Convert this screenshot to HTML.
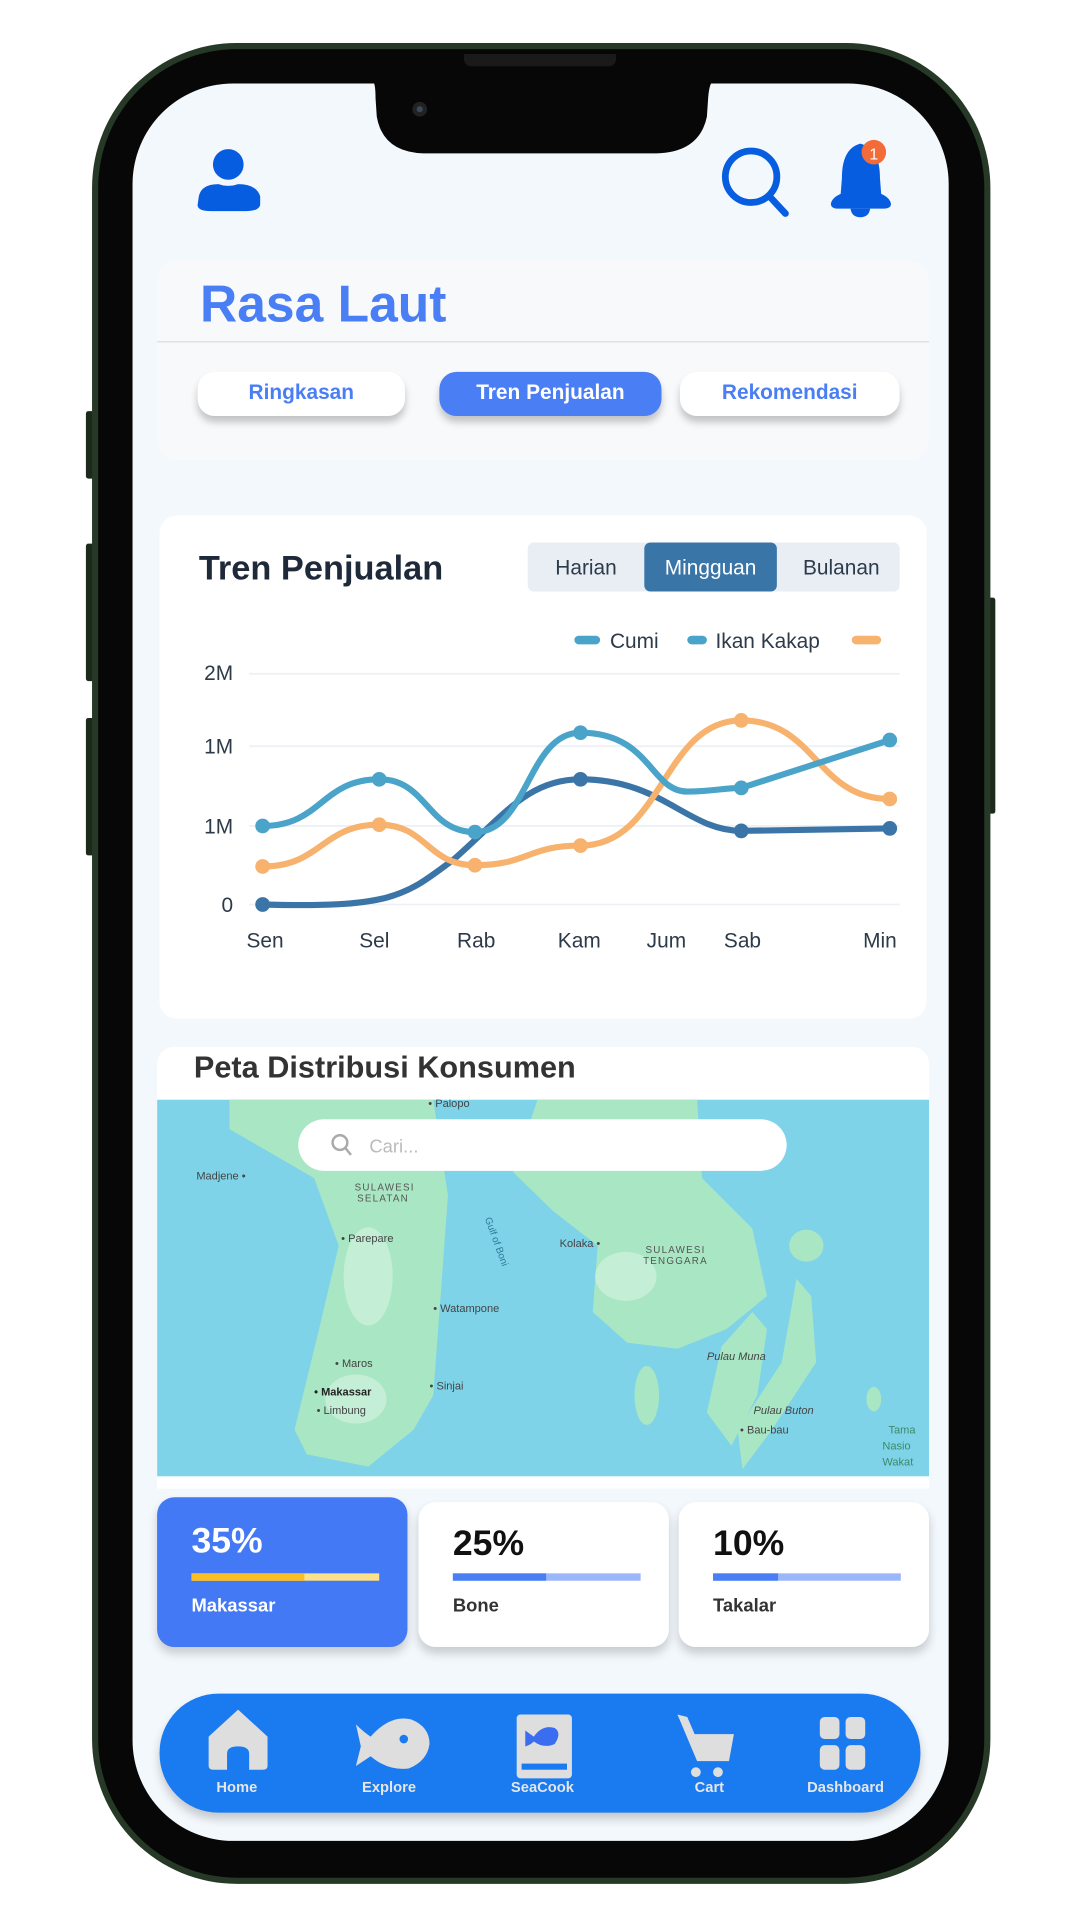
<!DOCTYPE html>
<html><head><meta charset="utf-8"><style>
html,body{margin:0;padding:0;background:#fff;width:1080px;height:1920px;overflow:hidden}
#w{position:absolute;left:0;top:0;width:880px;height:1565px;transform:scale(1.22727);transform-origin:0 0;font-family:"Liberation Sans",sans-serif}
.a{position:absolute}
.pill{position:absolute;top:303px;height:36px;border-radius:14px;background:#fff;box-shadow:0 5px 6px rgba(0,0,0,.22);color:#4a7ef5;font-weight:bold;font-size:17px;line-height:34px;text-align:center}
.card{position:absolute;top:1220px;height:122px;width:204px;border-radius:14px;background:#fff;box-shadow:0 5px 8px rgba(0,0,0,.18)}
.card .p{position:absolute;left:28px;top:18px;font-size:29px;font-weight:bold;color:#111}
.card .b{position:absolute;left:28px;top:62px;width:153px;height:6px;background:#9bb7fb}
.card .b i{display:block;height:6px;background:#4a7ef5}
.card .n{position:absolute;left:28px;top:80px;font-size:15px;font-weight:bold;color:#333}
.nl{position:absolute;top:1449px;color:#e6e6e6;font-size:12px;font-weight:bold;text-align:center;width:100px}
</style></head><body><div id="w">
<div class="a" style="left:70px;top:335px;width:8px;height:55px;background:#1c2a1c;border-radius:2px"></div>
<div class="a" style="left:70px;top:443px;width:8px;height:112px;background:#1c2a1c;border-radius:2px"></div>
<div class="a" style="left:70px;top:585px;width:8px;height:112px;background:#1c2a1c;border-radius:2px"></div>
<div class="a" style="left:804px;top:487px;width:7px;height:176px;background:#1c2a1c;border-radius:2px"></div>
<div class="a" style="left:75px;top:35px;width:732px;height:1500px;border-radius:118px;background:#263826"></div>
<div class="a" style="left:80px;top:40px;width:722px;height:1490px;border-radius:113px;background:#070707"></div>
<div class="a" style="left:108px;top:68px;width:665px;height:1432px;border-radius:82px;background:#f3f8fd;overflow:hidden"></div>
<div class="a" style="left:378px;top:44px;width:124px;height:10px;border-radius:0 0 6px 6px;background:#1a1a1a"></div>
<svg class="a" style="left:0;top:0" width="880" height="200">
<path d="M300,66 L303,66 Q306,66 306,80 L307,95 Q312,124 345,125 L535,125 Q570,124 576,95 L577,80 Q578,66 582,66 Z" fill="#070707"/>
<circle cx="342" cy="89" r="6" fill="#222"/><circle cx="342" cy="89" r="2.5" fill="#3a4a5a"/>
<circle cx="186" cy="134" r="12.5" fill="#075de0"/>
<path d="M162,160 Q164,150 178,150 Q186,153 194,150 Q209,150 212,160 L212,167 Q211,172 200,172 L172,172 Q161,172 161,167 Z" fill="#075de0"/>
<circle cx="612" cy="144" r="21" fill="none" stroke="#075de0" stroke-width="5.5"/>
<line x1="627" y1="160" x2="640" y2="174" stroke="#075de0" stroke-width="5.5" stroke-linecap="round"/>
<path d="M701,117 Q686,121 686,145 L685,158 Q678,161 677,166 Q677,170 683,170 L720,170 Q726,170 726,166 Q725,161 718,158 L717,145 Q717,121 701,117 Z" fill="#075de0"/>
<path d="M693,170 Q694,177 701,177 Q708,177 709,170 Z" fill="#075de0"/>
<circle cx="712" cy="124" r="10" fill="#f26b38"/>
<text x="712" y="130" fill="#fff" font-size="13" font-family="Liberation Sans" text-anchor="middle">1</text>
</svg>
<div class="a" style="left:128px;top:212px;width:629px;height:163px;border-radius:16px;background:#f8f9fa"></div>
<div class="a" style="left:163px;top:224px;font-size:42px;font-weight:bold;color:#4a7ef5">Rasa Laut</div>
<div class="a" style="left:128px;top:278px;width:629px;height:1px;background:#dcdcdc"></div>
<div class="pill" style="left:161px;width:169px">Ringkasan</div>
<div class="pill" style="left:358px;width:181px;background:#4a7ef5;color:#fff">Tren Penjualan</div>
<div class="pill" style="left:554px;width:179px">Rekomendasi</div>
<div class="a" style="left:130px;top:420px;width:625px;height:410px;border-radius:14px;background:#fff"></div>
<div class="a" style="left:162px;top:447px;font-size:28px;color:#1e2a3a;font-weight:600">Tren Penjualan</div>
<div class="a" style="left:430px;top:442px;width:303px;height:40px;border-radius:5px;background:#e9eef4"></div>
<div class="a" style="left:525px;top:442px;width:108px;height:40px;border-radius:5px;background:#3a75a8"></div>
<div class="a" style="left:430px;top:453px;width:95px;text-align:center;font-size:17px;color:#2c3a4a">Harian</div>
<div class="a" style="left:525px;top:453px;width:108px;text-align:center;font-size:17px;color:#fff">Mingguan</div>
<div class="a" style="left:633px;top:453px;width:105px;text-align:center;font-size:17px;color:#2c3a4a">Bulanan</div>
<svg class="a" style="left:0;top:0" width="880" height="840" font-family="Liberation Sans">
<rect x="468" y="518" width="21" height="7" rx="3.5" fill="#4aa3c8"/>
<text x="497" y="528" font-size="17" fill="#2c3a4a">Cumi</text>
<rect x="560" y="518" width="16" height="7" rx="3.5" fill="#4aa3c8"/>
<text x="583" y="528" font-size="17" fill="#2c3a4a">Ikan Kakap</text>
<rect x="694" y="518" width="24" height="7" rx="3.5" fill="#f7b26e"/>
<g stroke="#edf0f4" stroke-width="1.5"><line x1="203" y1="549" x2="733" y2="549"/><line x1="203" y1="608" x2="733" y2="608"/><line x1="203" y1="673" x2="733" y2="673"/><line x1="203" y1="737" x2="733" y2="737"/></g>
<g font-size="17" fill="#2c3a4a" text-anchor="end"><text x="190" y="554">2M</text><text x="190" y="614">1M</text><text x="190" y="679">1M</text><text x="190" y="743">0</text></g>
<g font-size="17" fill="#2c3a4a" text-anchor="middle"><text x="216" y="772">Sen</text><text x="305" y="772">Sel</text><text x="388" y="772">Rab</text><text x="472" y="772">Kam</text><text x="543" y="772">Jum</text><text x="605" y="772">Sab</text><text x="717" y="772">Min</text></g>
<g fill="none" stroke-width="5" stroke-linecap="round">
<path d="M214,737 C320,740 330,730 370,700 C410,665 430,635 473,635 C540,635 560,677 604,677 L725,675" stroke="#3b75a8"/>
<path d="M214,706 C262,706 262,672 309,672 C348,672 348,705 387,705 C430,705 430,689 473,689 C540,689 540,587 604,587 C665,587 665,651 725,651" stroke="#f7b26e"/>
<path d="M214,673 C262,673 262,635 309,635 C348,635 348,678 387,678 C430,678 430,597 473,597 C530,597 530,645 560,645 C580,645 590,642 604,642 L725,603" stroke="#4aa3c8"/>
</g>
<g fill="#3b75a8"><circle cx="214" cy="737" r="6"/><circle cx="473" cy="635" r="6"/><circle cx="604" cy="677" r="6"/><circle cx="725" cy="675" r="6"/></g>
<g fill="#f7b26e"><circle cx="214" cy="706" r="6"/><circle cx="309" cy="672" r="6"/><circle cx="387" cy="705" r="6"/><circle cx="473" cy="689" r="6"/><circle cx="604" cy="587" r="6"/><circle cx="725" cy="651" r="6"/></g>
<g fill="#4aa3c8"><circle cx="214" cy="673" r="6"/><circle cx="309" cy="635" r="6"/><circle cx="387" cy="678" r="6"/><circle cx="473" cy="597" r="6"/><circle cx="604" cy="642" r="6"/><circle cx="725" cy="603" r="6"/></g>
</svg>
<div class="a" style="left:128px;top:853px;width:629px;height:360px;border-radius:14px 14px 0 0;background:#fff"></div>
<div class="a" style="left:158px;top:856px;font-size:25px;font-weight:bold;color:#333">Peta Distribusi Konsumen</div>
<svg class="a" style="left:128px;top:896px" width="629" height="307" font-family="Liberation Sans">
<g transform="translate(-128,-896)">
<rect x="128" y="896" width="629" height="307" fill="#7fd3e8"/>
<g fill="#a9e6c4">
<path d="M187,896 L353,896 L365,974 L359,1056 L353,1137 L337,1165 L300,1195 L250,1185 L240,1165 L260,1083 L276,1015 L256,960 L187,920 Z"/>
<path d="M438,896 L568,896 L572,960 L613,1001 L625,1056 L592,1083 L552,1099 L511,1094 L483,1069 L487,1015 L451,987 L418,955 Z"/>
<path d="M613,1069 L588,1097 L576,1151 L596,1178 L617,1137 L625,1083 Z"/>
<path d="M649,1042 L661,1056 L665,1110 L629,1165 L605,1197 L601,1165 L637,1110 Z"/>
<ellipse cx="657" cy="1015" rx="14" ry="13"/><ellipse cx="527" cy="1137" rx="10" ry="24"/><ellipse cx="712" cy="1140" rx="6" ry="10"/>
</g>
<g fill="#c4eed6"><ellipse cx="300" cy="1040" rx="20" ry="40"/><ellipse cx="510" cy="1040" rx="25" ry="20"/><ellipse cx="290" cy="1140" rx="25" ry="20"/></g>
<g font-size="9" fill="#444">
<text x="349" y="902">• Palopo</text>
<text x="160" y="961">Madjene •</text>
<text x="289" y="970" fill="#555" font-size="8" letter-spacing="1">SULAWESI</text>
<text x="291" y="979" fill="#555" font-size="8" letter-spacing="1">SELATAN</text>
<text x="278" y="1012">• Parepare</text>
<text x="456" y="1016">Kolaka •</text>
<text x="526" y="1021" fill="#555" font-size="8" letter-spacing="1">SULAWESI</text>
<text x="524" y="1030" fill="#555" font-size="8" letter-spacing="1">TENGGARA</text>
<text x="353" y="1069">• Watampone</text>
<text x="273" y="1114">• Maros</text>
<text x="256" y="1137" fill="#222" font-weight="bold">• Makassar</text>
<text x="350" y="1132">• Sinjai</text>
<text x="258" y="1152">• Limbung</text>
<text x="576" y="1108" font-style="italic">Pulau Muna</text>
<text x="614" y="1152" font-style="italic">Pulau Buton</text>
<text x="603" y="1168">• Bau-bau</text>
<text x="724" y="1168" fill="#3a8a6a">Tama</text><text x="719" y="1181" fill="#3a8a6a">Nasio</text><text x="719" y="1194" fill="#3a8a6a">Wakat</text>
<text x="395" y="993" fill="#2a7a9a" font-size="8" transform="rotate(70 395 993)">Gulf of Boni</text>
</g>
<rect x="243" y="912" width="398" height="42" rx="21" fill="#fff"/>
<circle cx="277" cy="931" r="6" fill="none" stroke="#aaa" stroke-width="2"/><line x1="281" y1="935" x2="286" y2="941" stroke="#aaa" stroke-width="2"/>
<text x="301" y="939" font-size="15" fill="#bbb">Cari...</text>
</g></svg>
<div class="card" style="left:128px;background:#4479f5;top:1220px"><div class="p" style="color:#fff;top:20px">35%</div><div class="b" style="background:#fde08a"><i style="width:92px;background:#fbbf24"></i></div><div class="n" style="color:#fff">Makassar</div></div>
<div class="card" style="left:341px;top:1224px;height:118px"><div class="p">25%</div><div class="b" style="top:58px"><i style="width:76px"></i></div><div class="n" style="top:76px">Bone</div></div>
<div class="card" style="left:553px;top:1224px;height:118px"><div class="p">10%</div><div class="b" style="top:58px"><i style="width:53px"></i></div><div class="n" style="top:76px">Takalar</div></div>
<div class="a" style="left:130px;top:1380px;width:620px;height:97px;border-radius:48px;background:#1a7af0;box-shadow:0 5px 8px rgba(0,0,0,.2)"></div>
<svg class="a" style="left:0;top:1375px" width="880" height="100">
<g fill="#dedede">
<path d="M170,40 L194,18 L218,40 L218,64 Q218,67 214,67 L203,67 L203,54 Q203,48 194,48 Q185,48 185,54 L185,67 L174,67 Q170,67 170,64 Z"/>
<path d="M290,30 Q296,36 302,40 Q318,22 335,26 Q350,32 350,46 Q348,60 333,66 Q316,68 302,56 Q296,60 290,64 L294,48 Z"/>
<rect x="421" y="22" width="45" height="52" rx="3"/>
<path d="M552,22 L560,24 L566,38 L598,38 L594,60 L568,60 Z"/>
<circle cx="567" cy="69" r="4"/><circle cx="585" cy="69" r="4"/>
<rect x="668" y="24" width="16" height="18" rx="4"/><rect x="689" y="24" width="16" height="18" rx="4"/>
<rect x="668" y="47" width="16" height="20" rx="4"/><rect x="689" y="47" width="16" height="20" rx="4"/>
</g>
<circle cx="329" cy="42" r="3.5" fill="#1a7af0"/>
<rect x="425" y="62" width="37" height="5" fill="#1a7af0"/>
<path d="M428,35 Q432,38 435,40 Q442,30 452,33 Q458,37 452,46 Q443,50 435,44 Q432,47 428,48 Z" fill="#3a6df0"/>
</svg>
<div class="nl" style="left:143px">Home</div>
<div class="nl" style="left:267px">Explore</div>
<div class="nl" style="left:392px">SeaCook</div>
<div class="nl" style="left:528px">Cart</div>
<div class="nl" style="left:639px">Dashboard</div>
</div></body></html>
